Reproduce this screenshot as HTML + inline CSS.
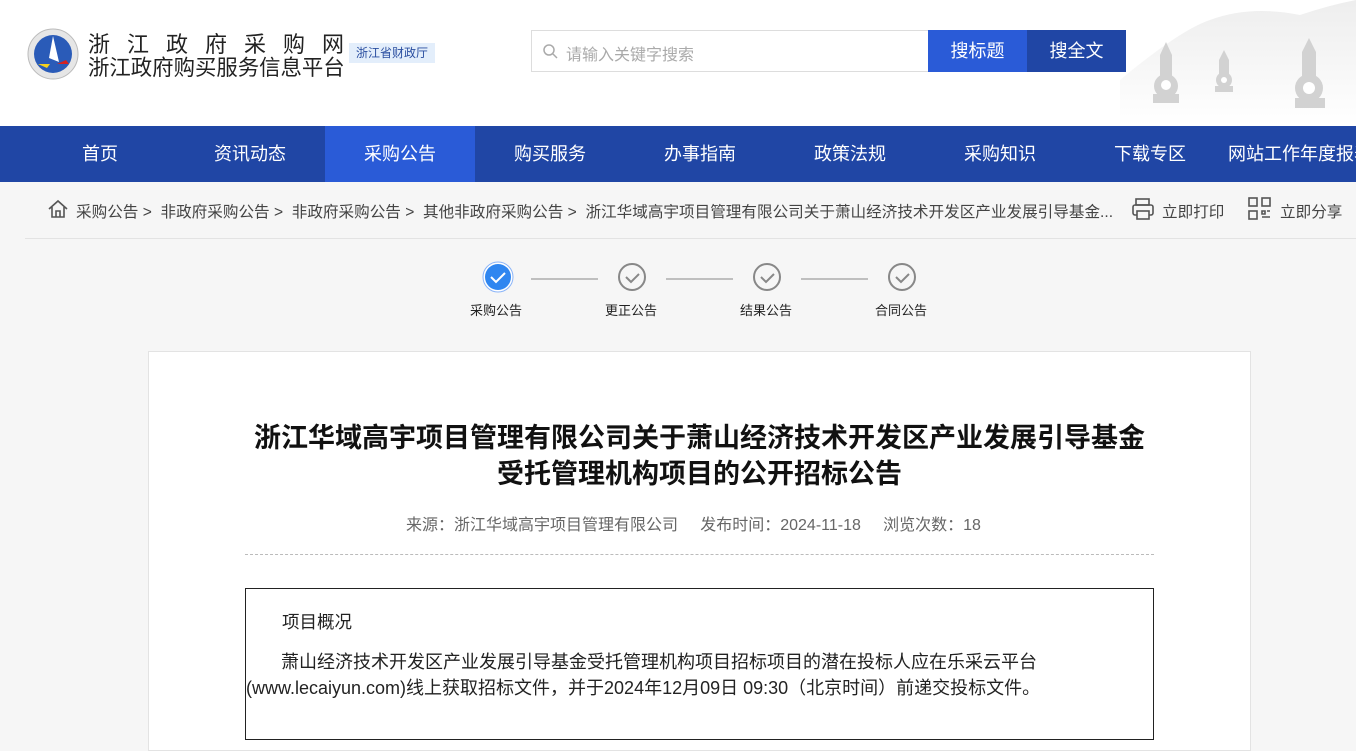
<!DOCTYPE html>
<html><head><meta charset="utf-8"><style>
*{margin:0;padding:0;box-sizing:border-box}
body{width:1356px;height:745px;overflow:hidden;background:#f6f6f6;font-family:"Liberation Sans","Noto Sans CJK SC",sans-serif;color:#333;position:relative}
.hdr{position:absolute;left:0;top:0;width:1356px;height:126px;background:#fff;overflow:hidden}
.nav{position:absolute;top:126px;left:0;width:1356px;height:56px;background:#2046a5}
.nav div{position:absolute;top:0;height:56px;line-height:56px;color:#fff;font-size:18px;text-align:center;width:150px;white-space:nowrap}
.ab{position:absolute;white-space:nowrap}
</style></head><body>
<div class="hdr">
 <svg class="ab" style="left:27px;top:28px" width="52" height="52"><circle cx="26" cy="26" r="25" fill="#e6e6e6" stroke="#bbb"/><circle cx="26" cy="26" r="19" fill="#2a5bb8"/><path d="M26 8 L32 34 L22 30Z" fill="#fff"/><path d="M11 36 h12 l-3 4z" fill="#f4d21f"/><path d="M30 36 h12 l-3 -4z" fill="#d42222"/></svg>
 <div class="ab" style="left:88px;top:27px;font-size:22px;letter-spacing:17px;color:#222">浙江政府采购网</div>
 <div class="ab" style="left:88px;top:51px;font-size:21.4px;color:#222">浙江政府购买服务信息平台</div>
 <div class="ab" style="left:349px;top:43px;width:86px;height:20px;background:#e3eefb;color:#2a4ea0;font-size:12px;line-height:20px;text-align:center">浙江省财政厅</div>
 <div class="ab" style="left:531px;top:30px;width:398px;height:42px;border:1px solid #ddd;border-right:none;background:#fff"></div>
 <svg class="ab" style="left:543px;top:44px" width="15" height="15"><circle cx="6" cy="6" r="5" fill="none" stroke="#aaa" stroke-width="1.5"/><path d="M10 10l4 4" stroke="#aaa" stroke-width="1.5"/></svg>
 <div class="ab" style="left:566px;top:41px;font-size:16px;color:#aaa">请输入关键字搜索</div>
 <div class="ab" style="left:928px;top:30px;width:99px;height:42px;background:#2a5bd7;color:#fff;font-size:18px;line-height:42px;text-align:center">搜标题</div>
 <div class="ab" style="left:1027px;top:30px;width:99px;height:42px;background:#2046a5;color:#fff;font-size:18px;line-height:42px;text-align:center">搜全文</div>
 <svg class="ab" style="left:1100px;top:0" width="256" height="126"><defs><linearGradient id="g" x1="0" x2="0" y1="0" y2="1"><stop offset="0" stop-color="#e2e2e2"/><stop offset="1" stop-color="#fff"/></linearGradient></defs><path d="M20 80 Q80 30 110 20 Q150 5 200 15 Q230 5 256 0 V126 H20Z" fill="url(#g)" opacity=".6"/>
 <g fill="#d2d2d2"><path d="M66 42 L60 55 H72Z"/><rect x="60" y="55" width="12" height="30"/><circle cx="66" cy="86" r="12"/><rect x="53" y="94" width="26" height="9"/><path d="M124 50 L119 60 H129Z"/><rect x="119" y="60" width="10" height="20"/><circle cx="124" cy="80" r="8"/><rect x="115" y="86" width="18" height="6"/><path d="M209 38 L202 52 H216Z"/><rect x="202" y="52" width="14" height="30"/><circle cx="209" cy="88" r="14"/><rect x="195" y="98" width="30" height="10"/></g><g fill="#fff"><circle cx="66" cy="85" r="5"/><circle cx="124" cy="80" r="3"/><circle cx="209" cy="88" r="6"/></g></svg>
</div>
<div class="nav">
 <div style="left:25px">首页</div><div style="left:175px">资讯动态</div><div style="left:325px;background:#2a5bd7">采购公告</div><div style="left:475px">购买服务</div><div style="left:625px">办事指南</div><div style="left:775px">政策法规</div><div style="left:925px">采购知识</div><div style="left:1075px">下载专区</div><div style="left:1225px;text-align:left;padding-left:3px">网站工作年度报表</div>
</div>
<svg class="ab" style="left:47px;top:198px" width="22" height="22"><path d="M2 11 L11 3 L20 11 M5 9 V19 H17 V9 M9 19 V13 H13 V19" fill="none" stroke="#555" stroke-width="1.6"/></svg>
<div class="ab" style="left:76px;top:200px;font-size:15.6px;color:#444">采购公告 &gt;&nbsp; 非政府采购公告 &gt;&nbsp; 非政府采购公告 &gt;&nbsp; 其他非政府采购公告 &gt;&nbsp; 浙江华域高宇项目管理有限公司关于萧山经济技术开发区产业发展引导基金...</div>
<svg class="ab" style="left:1131px;top:197px" width="24" height="24"><rect x="5" y="2" width="13" height="6" fill="none" stroke="#555" stroke-width="1.6"/><rect x="2" y="8" width="20" height="10" rx="2" fill="none" stroke="#555" stroke-width="1.6"/><rect x="6" y="14" width="12" height="8" fill="#f6f6f6" stroke="#555" stroke-width="1.6"/></svg>
<div class="ab" style="left:1162px;top:200px;font-size:15.6px;color:#444">立即打印</div>
<svg class="ab" style="left:1248px;top:197px" width="24" height="24" fill="none" stroke="#555" stroke-width="1.6"><rect x="1" y="1" width="8" height="8"/><rect x="14" y="1" width="8" height="8"/><rect x="1" y="14" width="8" height="8"/><path d="M14 14h3v3h-3zM19 14h3M14 20h8"/></svg>
<div class="ab" style="left:1280px;top:200px;font-size:15.6px;color:#444">立即分享</div>
<div class="ab" style="left:25px;top:238px;width:1331px;height:1px;background:#e3e3e3"></div>
<svg class="ab" style="left:470px;top:260px" width="470" height="36">
 <circle cx="28" cy="17" r="15" fill="#fff" stroke="#8ab4f8"/><circle cx="28" cy="17" r="13" fill="#2f86f0"/><path d="M21 17l5 5 9-9" stroke="#fff" stroke-width="2" fill="none"/>
 <path d="M61 19H128M196 19H263M331 19H398" stroke="#888"/>
 <g fill="none" stroke="#888" stroke-width="2"><circle cx="162" cy="17" r="13"/><circle cx="297" cy="17" r="13"/><circle cx="432" cy="17" r="13"/><path d="M156 17l5 5 8-8M291 17l5 5 8-8M426 17l5 5 8-8"/></g>
</svg>
<div class="ab" style="left:470px;top:300px;font-size:13px;color:#222">采购公告</div>
<div class="ab" style="left:605px;top:300px;font-size:13px;color:#222">更正公告</div>
<div class="ab" style="left:740px;top:300px;font-size:13px;color:#222">结果公告</div>
<div class="ab" style="left:875px;top:300px;font-size:13px;color:#222">合同公告</div>
<div class="ab" style="left:148px;top:351px;width:1103px;height:400px;background:#fff;border:1px solid #e3e3e3"></div>
<div class="ab" style="left:148px;top:420px;width:1103px;text-align:center;font-size:27px;font-weight:bold;line-height:36px;color:#111">浙江华域高宇项目管理有限公司关于萧山经济技术开发区产业发展引导基金<br>受托管理机构项目的公开招标公告</div>
<div class="ab" style="left:406px;top:511px;font-size:16px;color:#666">来源：浙江华域高宇项目管理有限公司&nbsp;&nbsp;&nbsp;&nbsp; 发布时间：2024-11-18&nbsp;&nbsp;&nbsp;&nbsp; 浏览次数：18</div>
<div class="ab" style="left:245px;top:554px;width:909px;border-top:1px dashed #bbb"></div>
<div class="ab" style="left:245px;top:588px;width:909px;height:152px;border:1px solid #222"></div>
<div class="ab" style="left:282px;top:609px;font-size:17.5px;color:#222">项目概况</div>
<div class="ab" style="left:246px;top:649px;font-size:18px;color:#222;line-height:26px">&nbsp;&nbsp;&nbsp;&nbsp;&nbsp;&nbsp;&nbsp;萧山经济技术开发区产业发展引导基金受托管理机构项目招标项目的潜在投标人应在乐采云平台<br>(www.lecaiyun.com)线上获取招标文件，并于2024年12月09日 09:30（北京时间）前递交投标文件。</div>
</body></html>
